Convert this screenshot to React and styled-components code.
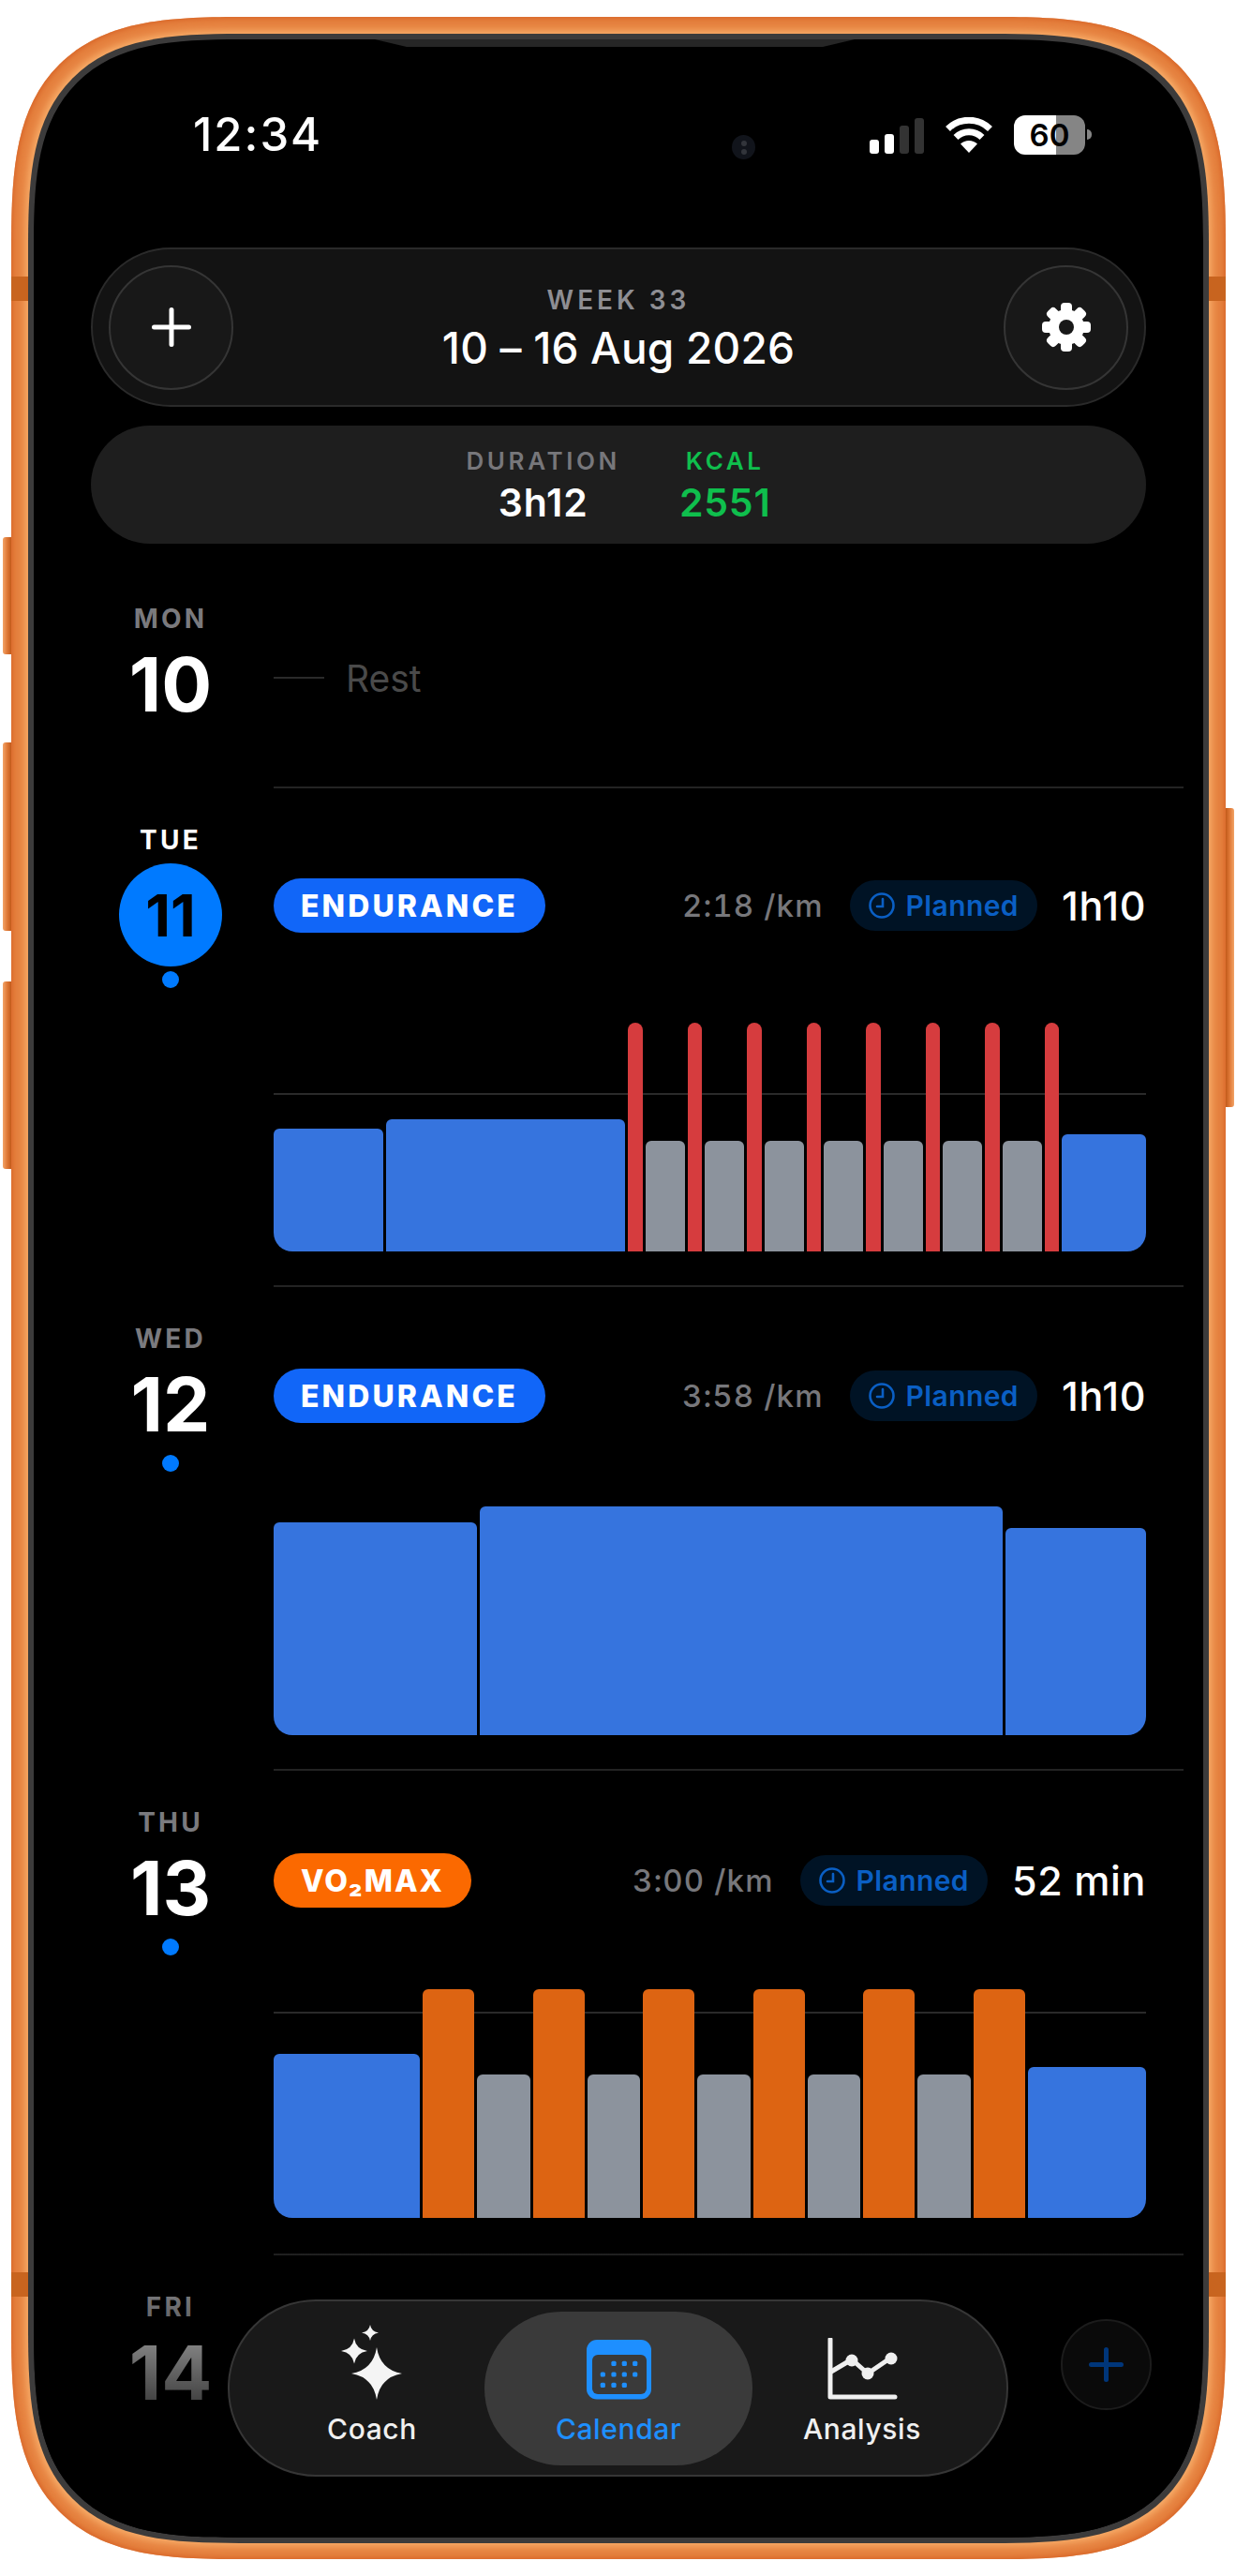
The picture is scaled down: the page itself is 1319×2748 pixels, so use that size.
import React from 'react';
import styled, { createGlobalStyle } from 'styled-components';

const GlobalStyle = createGlobalStyle`
  html, body {
    margin: 0;
    padding: 0;
    background: #fff;
    font-family: Inter, "Noto Sans", sans-serif;
  }
  * { box-sizing: border-box; }
`;

const BLUE = '#3674de';
const RED = '#d63c3e';
const GREY = '#8c939d';
const ORANGE = '#dd6412';

const tueBars = [
  { w: 117, h: 131, c: BLUE },
  { w: 255, h: 141, c: BLUE },
  ...Array.from({ length: 15 }, (_, i) =>
    i % 2 === 0 ? { w: 15.5, h: 244, c: RED } : { w: 42, h: 118, c: GREY }
  ),
  { w: 90, h: 125, c: BLUE },
];

const wedBars = [
  { w: 217, h: 227, c: BLUE },
  { w: 558, h: 244, c: BLUE },
  { w: 150, h: 221, c: BLUE },
];

const thuBars = [
  { w: 156, h: 175, c: BLUE },
  ...Array.from({ length: 11 }, (_, i) =>
    i % 2 === 0 ? { w: 55, h: 244, c: ORANGE } : { w: 56.5, h: 153, c: GREY }
  ),
  { w: 126.5, h: 161, c: BLUE },
];

const Page = styled.div`
  width: 1319px;
  height: 2748px;
  padding: 18px 11px 18px 12px;
  overflow: hidden;
`;

const Phone = styled.div`
  position: relative;
  height: 2712px;
  padding: 18px 18px 17px 18px;
  border-radius: 185px;
  background: #e5813f;
  box-shadow: inset 0 0 5px 2px #d9682a;
  @supports (corner-shape: squircle) {
    border-radius: 250px;
    corner-shape: superellipse(1.6);
  }
`;

const SideButton = styled.div`
  position: absolute;
  top: ${p => p.$top}px;
  height: ${p => p.$height}px;
  width: 9px;
  ${p => (p.$right ? 'right: -9px;' : 'left: -9px;')}
  border-radius: ${p => (p.$right ? '0 3px 3px 0' : '3px 0 0 3px')};
  background: linear-gradient(${p => (p.$right ? '270deg' : '90deg')}, #f2a468, #e07a38 50%, #c25a1a);
`;

const Antenna = styled.div`
  position: absolute;
  top: ${p => p.$top}px;
  height: 26px;
  width: 18px;
  ${p => (p.$right ? 'right: 0;' : 'left: 0;')}
  background: #c8641f;
`;

const Bezel = styled.div`
  height: 100%;
  padding: 6px;
  border-radius: 167px;
  background: #3c3b3b;
  box-shadow: 0 0 9px 3px #f9b06c;
  @supports (corner-shape: squircle) {
    border-radius: 232px;
    corner-shape: superellipse(1.6);
  }
`;

const Screen = styled.div`
  position: relative;
  height: 100%;
  overflow: hidden;
  border-radius: 161px;
  background: #000;
  color: #fff;
  @supports (corner-shape: squircle) {
    border-radius: 226px;
    corner-shape: superellipse(1.6);
  }
`;

const Notch = styled.div`
  position: absolute;
  top: 0;
  left: 364px;
  width: 512px;
  height: 8px;
  background: #262626;
  clip-path: polygon(0 0, 100% 0, calc(100% - 34px) 100%, 34px 100%);
`;

const Camera = styled.div`
  position: absolute;
  top: 102px;
  left: 745px;
  width: 25px;
  height: 26px;
  border-radius: 50%;
  background: #11141b;
  display: flex;
  flex-direction: column;
  align-items: center;
  justify-content: center;
  gap: 3px;
  &::before, &::after {
    content: '';
    width: 6px;
    height: 6px;
    border-radius: 50%;
    background: #32353b;
  }
`;

const StatusBar = styled.div`
  display: flex;
  align-items: center;
  justify-content: space-between;
  height: 42px;
  margin-top: 81px;
  padding: 0 126px 0 170px;
`;

const Clock = styled.div`
  font-size: 49px;
  font-weight: 500;
  line-height: 42px;
  letter-spacing: 2px;
  color: #fff;
`;

const StatusIcons = styled.div`
  display: flex;
  align-items: center;
  gap: 23px;
`;

const Signal = styled.div`
  display: flex;
  align-items: flex-end;
  gap: 6px;
  height: 38px;
  margin-top: 2px;
`;

const SignalBar = styled.div`
  width: 10px;
  height: ${p => p.$h}px;
  border-radius: 3px;
  background: ${p => (p.$on ? '#fff' : '#333')};
`;

const Battery = styled.div`
  position: relative;
  width: 76px;
  height: 42px;
  border-radius: 12px;
  background: linear-gradient(90deg, #fff 59%, #858585 59%);
  color: #000;
  font-size: 33px;
  font-weight: 600;
  line-height: 42px;
  text-align: center;
  &::after {
    content: '';
    position: absolute;
    right: -7px;
    top: 15px;
    width: 5px;
    height: 11px;
    border-radius: 0 5px 5px 0;
    background: #858585;
  }
`;

const Content = styled.div`
  padding: 0 61px;
`;

const WeekPanel = styled.div`
  display: flex;
  align-items: center;
  height: 170px;
  margin-top: 99px;
  padding: 0 17px;
  border: 2px solid #2a2a2a;
  border-radius: 85px;
  background: #131313;
`;

const RoundButton = styled.div`
  flex: none;
  display: flex;
  align-items: center;
  justify-content: center;
  width: 133px;
  height: 133px;
  border: 2px solid #353535;
  border-radius: 50%;
  background: #181818;
`;

const WeekCenter = styled.div`
  flex: 1;
  display: flex;
  flex-direction: column;
  align-items: center;
  gap: 14px;
  padding-top: 2px;
`;

const WeekLabel = styled.div`
  font-size: 28px;
  font-weight: 600;
  line-height: 28px;
  letter-spacing: 4px;
  color: #8e8e93;
`;

const WeekDates = styled.div`
  font-size: 46px;
  font-weight: 500;
  line-height: 46px;
  letter-spacing: 0.2px;
  color: #fff;
`;

const StatsPanel = styled.div`
  display: flex;
  align-items: center;
  justify-content: center;
  gap: 63px;
  height: 126px;
  margin-top: 20px;
  border-radius: 63px;
  background: #1e1e1e;
`;

const Stat = styled.div`
  display: flex;
  flex-direction: column;
  align-items: center;
  gap: 11px;
  color: ${p => p.$color || '#fff'};
`;

const StatLabel = styled.div`
  font-size: 26px;
  font-weight: 600;
  line-height: 26px;
  letter-spacing: 3.6px;
  color: ${p => p.$color || '#77777b'};
`;

const StatValue = styled.div`
  font-size: 41px;
  font-weight: 600;
  line-height: 40px;
  letter-spacing: 0.8px;
`;

const DayList = styled.div`
  margin-top: 25px;
`;

const DayRow = styled.div`
  display: flex;
`;

const DayCol = styled.div`
  flex: none;
  display: flex;
  flex-direction: column;
  align-items: center;
  width: 170px;
  margin-right: 25px;
  padding-top: 41px;
`;

const DayLabel = styled.div`
  font-size: 28px;
  font-weight: 700;
  line-height: 29px;
  letter-spacing: 3.2px;
  color: ${p => p.$color || '#7a7a7e'};
`;

const DayNumber = styled.div`
  margin-top: 16px;
  font-size: 80px;
  font-weight: 700;
  line-height: 78px;
  color: #fff;
`;

const TodayNumber = styled.div`
  display: flex;
  align-items: center;
  justify-content: center;
  width: 110px;
  height: 110px;
  margin-top: 10px;
  border-radius: 50%;
  background: #007aff;
  color: #000;
  font-size: 62px;
  font-weight: 700;
`;

const DayDot = styled.div`
  width: 18px;
  height: 18px;
  margin-top: ${p => (p.$today ? 5 : 15)}px;
  border-radius: 50%;
  background: #007aff;
`;

const DayBody = styled.div`
  flex: 1;
  margin-right: -40px;
  padding: ${p => p.$top}px 40px ${p => p.$bottom}px 0;
  min-height: ${p => p.$minHeight || 0}px;
  border-bottom: 2px solid #232323;
`;

const RestRow = styled.div`
  display: flex;
  align-items: center;
  gap: 23px;
  height: 40px;
  font-size: 39px;
  font-weight: 400;
  color: #4a4a4a;
`;

const RestDash = styled.div`
  width: 54px;
  height: 2px;
  background: #2a2a2a;
`;

const SessionHead = styled.div`
  display: flex;
  align-items: center;
  justify-content: space-between;
  height: 58px;
`;

const Badge = styled.div`
  display: flex;
  align-items: center;
  height: 58px;
  padding: 0 29px;
  border-radius: 29px;
  background: ${p => p.$bg};
  color: #fff;
  font-size: 32px;
  font-weight: 800;
  letter-spacing: ${p => p.$spacing}px;
`;

const SessionMeta = styled.div`
  display: flex;
  align-items: center;
`;

const Pace = styled.div`
  margin-right: 28px;
  font-size: 33px;
  font-weight: 500;
  font-variant-numeric: tabular-nums;
  letter-spacing: 1.1px;
  color: #77777b;
`;

const PlannedPill = styled.div`
  display: flex;
  align-items: center;
  gap: 12px;
  height: 54px;
  padding: 0 20px;
  border-radius: 27px;
  background: #001325;
  color: #0a5fc4;
  font-size: 30px;
  font-weight: 600;
  letter-spacing: 0.4px;
`;

const Duration = styled.div`
  margin-left: 26px;
  font-size: 43px;
  font-weight: 500;
  letter-spacing: 0.6px;
  color: #fff;
`;

const Chart = styled.div`
  position: relative;
  display: flex;
  align-items: flex-end;
  gap: 3px;
  height: 244px;
  margin-top: ${p => p.$top}px;
`;

const ChartLine = styled.div`
  position: absolute;
  left: 0;
  right: 0;
  top: ${p => p.$top}px;
  height: 2px;
  background: #2a2a2a;
`;

const Bar = styled.div`
  position: relative;
  flex: ${p => p.$w} 1 0;
  height: ${p => p.$h}px;
  border-radius: ${p => (p.$c === RED ? 8 : 6)}px ${p => (p.$c === RED ? 8 : 6)}px ${p => (p.$last ? 20 : 0)}px ${p => (p.$first ? 20 : 0)}px;
  background: ${p => p.$c};
`;

const BottomFade = styled.div`
  position: absolute;
  left: 0;
  right: 0;
  bottom: 0;
  height: 330px;
  background: linear-gradient(180deg, rgba(0, 0, 0, 0), #000 250px);
  pointer-events: none;
`;

const TabBar = styled.div`
  position: absolute;
  left: 207px;
  bottom: 65px;
  display: flex;
  align-items: center;
  width: 833px;
  height: 189px;
  padding: 0 34px 0 32px;
  border: 2px solid #363636;
  border-radius: 94px;
  background: #191919;
`;

const Tab = styled.div`
  flex: none;
  display: flex;
  flex-direction: column;
  align-items: center;
  width: ${p => p.$w}px;
  height: 164px;
  padding-top: 28px;
  border-radius: 82px;
  background: ${p => (p.$active ? '#3a3a3a' : 'transparent')};
  color: ${p => (p.$active ? '#1e8fff' : '#f0f0f0')};
`;

const TabIcon = styled.div`
  display: flex;
  align-items: flex-end;
  justify-content: center;
  height: 66px;
`;

const TabLabel = styled.div`
  margin-top: 16px;
  font-size: 30px;
  font-weight: 500;
  line-height: 30px;
  letter-spacing: 0.6px;
`;

const AddFab = styled.div`
  position: absolute;
  left: 1096px;
  bottom: 136px;
  display: flex;
  align-items: center;
  justify-content: center;
  width: 97px;
  height: 97px;
  border: 2px solid #1c1c1c;
  border-radius: 50%;
  background: #0a0a0a;
`;

const Plus = ({ size, color, stroke }) => (
  <svg width={size} height={size} viewBox={`0 0 ${size} ${size}`}>
    <path
      d={`M${size / 2} ${stroke / 2}V${size - stroke / 2}M${stroke / 2} ${size / 2}H${size - stroke / 2}`}
      stroke={color}
      strokeWidth={stroke}
      strokeLinecap="round"
      fill="none"
    />
  </svg>
);

const Gear = () => (
  <svg width="52" height="54" viewBox="0 0 52 54">
    {[0, 45, 90, 135, 180, 225, 270, 315].map(a => (
      <rect key={a} x="20" y="1" width="12" height="16" rx="4" fill="#fff" transform={`rotate(${a} 26 27)`} />
    ))}
    <circle cx="26" cy="27" r="19" fill="#fff" />
    <circle cx="26" cy="27" r="8" fill="#181818" />
  </svg>
);

const Wifi = () => (
  <svg width="50" height="38" viewBox="0 0 50 38">
    <path d="M2.5 12.5A32 32 0 0 1 47.5 12.5" stroke="#fff" strokeWidth="7" fill="none" />
    <path d="M11 21.5A20 20 0 0 1 39 21.5" stroke="#fff" strokeWidth="7" fill="none" />
    <path d="M25 38L16 28.5A13 13 0 0 1 34 28.5Z" fill="#fff" />
  </svg>
);

const PlannedClock = () => (
  <svg width="28" height="28" viewBox="0 0 28 28" fill="none" stroke="#0a5fc4" strokeWidth="2.6" strokeLinecap="round">
    <circle cx="14" cy="14" r="12.5" />
    <path d="M15 7v8H9" />
  </svg>
);

const star = (cx, cy, rx, ry, k = 0.14) => {
  const kx = rx * k;
  const ky = ry * k;
  return `M${cx} ${cy - ry}Q${cx + kx} ${cy - ky} ${cx + rx} ${cy}Q${cx + kx} ${cy + ky} ${cx} ${cy + ry}Q${cx - kx} ${cy + ky} ${cx - rx} ${cy}Q${cx - kx} ${cy - ky} ${cx} ${cy - ry}Z`;
};

const Sparkles = () => (
  <svg width="66" height="80" viewBox="0 0 66 80" fill="#f4f4f4">
    <path d={star(38, 52, 27, 28)} />
    <path d={star(14, 28, 14, 13.5)} />
    <path d={star(31, 8.5, 9, 8.5)} />
  </svg>
);

const calendarDots = [
  [29, 25.3], [40.3, 25.3], [51.7, 25.3],
  [17.3, 37], [29, 37], [40.3, 37], [51.7, 37],
  [17.3, 48.3], [29, 48.3], [40.3, 48.3],
];

const CalendarIcon = () => (
  <svg width="69" height="64" viewBox="0 0 69 64">
    <rect x="0" y="0" width="69" height="63.5" rx="11" fill="#1e8fff" />
    <rect x="6" y="16" width="58" height="42" rx="6" fill="#3a3a3a" />
    {calendarDots.map(([x, y]) => (
      <rect key={`${x}-${y}`} x={x - 2.6} y={y - 2.6} width="5.2" height="5.2" rx="1.5" fill="#1e8fff" />
    ))}
  </svg>
);

const AnalysisIcon = () => (
  <svg width="75" height="66" viewBox="0 0 75 66" fill="none" stroke="#f0f0f0" strokeWidth="5" strokeLinecap="round" strokeLinejoin="round">
    <path d="M3 1.5V63H72" />
    <path d="M4 36L26 23L43 38L68 21" strokeLinecap="butt" />
    <g fill="#f0f0f0" stroke="none">
      <circle cx="26" cy="24" r="6.5" />
      <circle cx="43" cy="38" r="6.5" />
      <circle cx="68" cy="22" r="6.5" />
    </g>
  </svg>
);

const Session = ({ headTop, chartTop, bottom, label, badgeBg, spacing, pace, time, bars, lineTop }) => (
  <DayBody $top={headTop} $bottom={bottom}>
    <SessionHead>
      <Badge $bg={badgeBg} $spacing={spacing}>{label}</Badge>
      <SessionMeta>
        <Pace>{pace}</Pace>
        <PlannedPill>
          <PlannedClock />
          Planned
        </PlannedPill>
        <Duration>{time}</Duration>
      </SessionMeta>
    </SessionHead>
    <Chart $top={chartTop}>
      {lineTop !== undefined && <ChartLine $top={lineTop} />}
      {bars.map((b, i) => (
        <Bar key={i} $w={b.w} $h={b.h} $c={b.c} $first={i === 0} $last={i === bars.length - 1} />
      ))}
    </Chart>
  </DayBody>
);

const App = () => (
  <Page>
    <GlobalStyle />
    <Phone>
      <SideButton $top={555} $height={125} />
      <SideButton $top={774} $height={201} />
      <SideButton $top={1029} $height={200} />
      <SideButton $right $top={844} $height={319} />
      <Antenna $top={277} />
      <Antenna $top={2406} />
      <Antenna $right $top={277} />
      <Antenna $right $top={2406} />
      <Bezel>
        <Screen>
          <Notch />
          <Camera />
          <StatusBar>
            <Clock>12:34</Clock>
            <StatusIcons>
              <Signal>
                <SignalBar $on $h={15} />
                <SignalBar $on $h={21} />
                <SignalBar $h={30} />
                <SignalBar $h={38} />
              </Signal>
              <Wifi />
              <Battery>60</Battery>
            </StatusIcons>
          </StatusBar>
          <Content>
            <WeekPanel>
              <RoundButton>
                <Plus size={42} color="#fff" stroke={5} />
              </RoundButton>
              <WeekCenter>
                <WeekLabel>WEEK 33</WeekLabel>
                <WeekDates>10 – 16 Aug 2026</WeekDates>
              </WeekCenter>
              <RoundButton>
                <Gear />
              </RoundButton>
            </WeekPanel>
            <StatsPanel>
              <Stat>
                <StatLabel>DURATION</StatLabel>
                <StatValue>3h12</StatValue>
              </Stat>
              <Stat $color="#0fbf4d">
                <StatLabel $color="#0fbf4d">KCAL</StatLabel>
                <StatValue>2551</StatValue>
              </Stat>
            </StatsPanel>
            <DayList>
              <DayRow>
                <DayCol>
                  <DayLabel>MON</DayLabel>
                  <DayNumber>10</DayNumber>
                </DayCol>
                <DayBody $top={98} $bottom={96}>
                  <RestRow>
                    <RestDash />
                    Rest
                  </RestRow>
                </DayBody>
              </DayRow>
              <DayRow>
                <DayCol>
                  <DayLabel $color="#fff">TUE</DayLabel>
                  <TodayNumber>11</TodayNumber>
                  <DayDot $today />
                </DayCol>
                <Session headTop={96} chartTop={96} bottom={36} label="ENDURANCE" badgeBg="#1166f8" spacing={3.1} pace="2:18 /km" time="1h10" bars={tueBars} lineTop={75} />
              </DayRow>
              <DayRow>
                <DayCol>
                  <DayLabel>WED</DayLabel>
                  <DayNumber>12</DayNumber>
                  <DayDot />
                </DayCol>
                <Session headTop={87} chartTop={89} bottom={36} label="ENDURANCE" badgeBg="#1166f8" spacing={3.1} pace="3:58 /km" time="1h10" bars={wedBars} />
              </DayRow>
              <DayRow>
                <DayCol>
                  <DayLabel>THU</DayLabel>
                  <DayNumber>13</DayNumber>
                  <DayDot />
                </DayCol>
                <Session headTop={88} chartTop={87} bottom={38} label="VO₂MAX" badgeBg="#fb6900" spacing={2} pace="3:00 /km" time="52 min" bars={thuBars} lineTop={24} />
              </DayRow>
              <DayRow>
                <DayCol>
                  <DayLabel $color="#a4a4a8">FRI</DayLabel>
                  <DayNumber>14</DayNumber>
                </DayCol>
                <DayBody $top={0} $bottom={0} $minHeight={236} />
              </DayRow>
            </DayList>
          </Content>
          <BottomFade />
          <TabBar>
            <Tab $w={240}>
              <TabIcon>
                <Sparkles />
              </TabIcon>
              <TabLabel>Coach</TabLabel>
            </Tab>
            <Tab $w={286} $active>
              <TabIcon>
                <CalendarIcon />
              </TabIcon>
              <TabLabel>Calendar</TabLabel>
            </Tab>
            <Tab $w={234}>
              <TabIcon>
                <AnalysisIcon />
              </TabIcon>
              <TabLabel>Analysis</TabLabel>
            </Tab>
          </TabBar>
          <AddFab>
            <Plus size={37} color="#00367a" stroke={5} />
          </AddFab>
        </Screen>
      </Bezel>
    </Phone>
  </Page>
);

export default App;
